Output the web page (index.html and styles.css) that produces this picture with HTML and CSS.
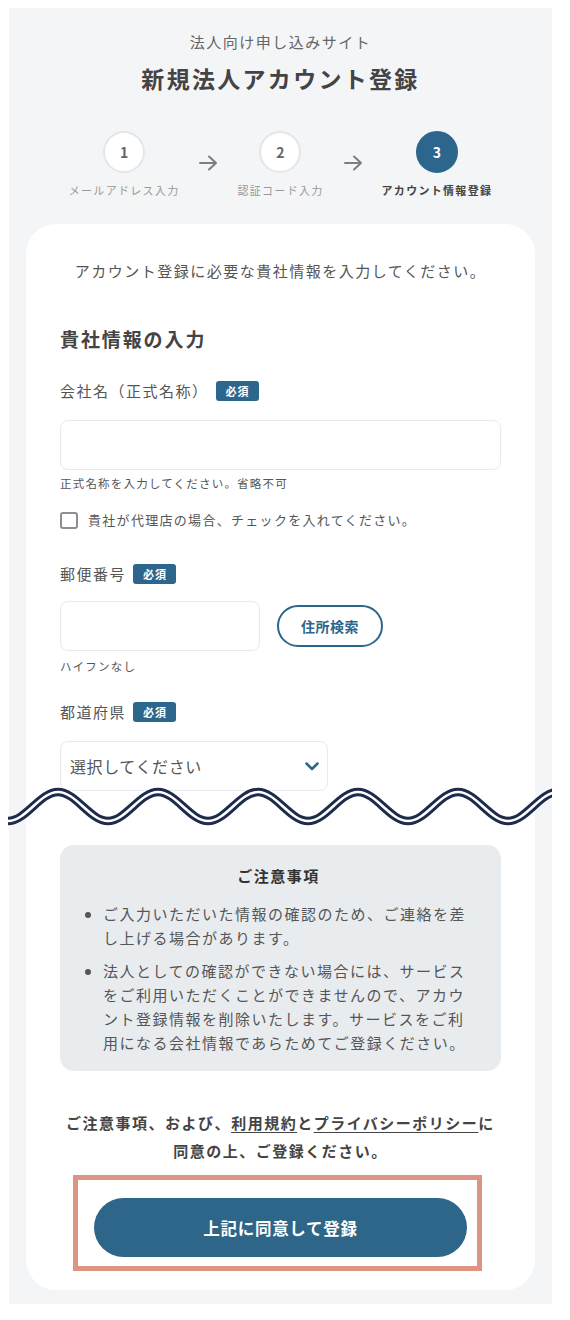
FILE: index.html
```html
<!DOCTYPE html>
<html lang="ja">
<head>
  <meta charset="UTF-8">
  <meta name="viewport" content="width=device-width, initial-scale=1.0">
  <title>新規法人アカウント登録</title>
  <link rel="stylesheet" href="styles.css">
</head>
<body>

<div class="page">
  <p class="site-name">法人向け申し込みサイト</p>
  <h1 class="page-title">新規法人アカウント登録</h1>

  <div class="steps">
    <div class="step">
      <span class="step-num">1</span>
      <span class="step-label">メールアドレス入力</span>
    </div>
    <svg class="step-arrow" width="20" height="16" viewBox="0 0 20 16">
      <path d="M2 8 H18 M11 1.5 L18 8 L11 14.5" fill="none" stroke="#7a7f85" stroke-width="2" stroke-linecap="round" stroke-linejoin="round"/>
    </svg>
    <div class="step">
      <span class="step-num">2</span>
      <span class="step-label">認証コード入力</span>
    </div>
    <svg class="step-arrow" width="20" height="16" viewBox="0 0 20 16">
      <path d="M2 8 H18 M11 1.5 L18 8 L11 14.5" fill="none" stroke="#7a7f85" stroke-width="2" stroke-linecap="round" stroke-linejoin="round"/>
    </svg>
    <div class="step current">
      <span class="step-num">3</span>
      <span class="step-label">アカウント情報登録</span>
    </div>
  </div>

  <div class="card">
    <p class="intro">アカウント登録に必要な貴社情報を入力してください。</p>

    <h2 class="section-title">貴社情報の入力</h2>

    <div class="field-label first">会社名（正式名称）<span class="badge">必須</span></div>
    <input type="text" class="text-input">
    <p class="hint">正式名称を入力してください。省略不可</p>

    <label class="check">
      <input type="checkbox">
      <span>貴社が代理店の場合、チェックを入れてください。</span>
    </label>

    <div class="field-label zip-label">郵便番号<span class="badge">必須</span></div>
    <div class="zip-row">
      <input type="text" class="text-input zip-input">
      <button class="search-btn">住所検索</button>
    </div>
    <p class="hint hint-zip">ハイフンなし</p>

    <div class="field-label pref-label">都道府県<span class="badge">必須</span></div>
    <div class="select-box">
      <span>選択してください</span>
      <svg width="14" height="9" viewBox="0 0 14 9">
        <path d="M1.5 1.5 L7 7 L12.5 1.5" fill="none" stroke="#2d668c" stroke-width="2.5" stroke-linecap="round" stroke-linejoin="round"/>
      </svg>
    </div>

    <div class="cut">
      <svg class="cut-wave" width="544" height="52" viewBox="0 0 544 52">
        <path d="M0 40 C18 40 32 11 50 11 S82 40 100 40 S132 11 150 11 S182 40 200 40 S232 11 250 11 S282 40 300 40 S332 11 350 11 S382 40 400 40 S432 11 450 11 S482 40 500 40 S532 11 550 11" fill="none" stroke="#1e2b4d" stroke-width="8.5"/>
        <path d="M0 40 C18 40 32 11 50 11 S82 40 100 40 S132 11 150 11 S182 40 200 40 S232 11 250 11 S282 40 300 40 S332 11 350 11 S382 40 400 40 S432 11 450 11 S482 40 500 40 S532 11 550 11" fill="none" stroke="#fff" stroke-width="2.6"/>
      </svg>
    </div>

    <div class="notice">
      <p class="notice-title">ご注意事項</p>
      <ul>
        <li>ご入力いただいた情報の確認のため、ご連絡を差し上げる場合があります。</li>
        <li>法人としての確認ができない場合には、サービスをご利用いただくことができませんので、アカウント登録情報を削除いたします。サービスをご利用になる会社情報であらためてご登録ください。</li>
      </ul>
    </div>

    <p class="agree">ご注意事項、および、<a href="#">利用規約</a>と<a href="#">プライバシーポリシー</a>に同意の上、ご登録ください。</p>

    <div class="submit-area">
      <span class="highlight"></span>
      <button class="submit-btn">上記に同意して登録</button>
    </div>
  </div>
</div>

</body>
</html>
```

FILE: styles.css
```css
body {
  margin: 0;
  background-color: #fff;
  font-family: "Noto Sans CJK JP", "Noto Sans", sans-serif;
  color: #555;
}

p {
  margin: 0;
}

.page {
  width: 543px;
  margin: 8px 0 0 9px;
  padding: 23px 0 14px;
  background-color: #f4f5f7;
}

.site-name {
  font-size: 15px;
  line-height: 22px;
  letter-spacing: 1.5px;
  text-align: center;
  color: #666;
}

.page-title {
  margin: 8px 0 0;
  font-size: 23px;
  line-height: 34px;
  letter-spacing: 2.3px;
  text-align: center;
  color: #444;
}

/* steps */
.steps {
  display: flex;
  justify-content: center;
  align-items: flex-start;
  gap: 19px;
  margin-top: 36px;
}

.step {
  display: flex;
  flex-direction: column;
  align-items: center;
}

.step-num {
  width: 42px;
  height: 42px;
  box-sizing: border-box;
  border: 2px solid #e3e6ea;
  border-radius: 50%;
  background-color: #fff;
  display: flex;
  align-items: center;
  justify-content: center;
  font-size: 14px;
  font-weight: bold;
  color: #666;
}

.step-label {
  margin-top: 9px;
  font-size: 11px;
  line-height: 16px;
  letter-spacing: 1.3px;
  color: #999;
}

.step.current .step-num {
  background-color: #2d668c;
  border-color: #2d668c;
  color: #fff;
}

.step.current .step-label {
  font-weight: bold;
  color: #444;
}

.step-arrow {
  margin-top: 24px;
}

/* card */
.card {
  margin: 26px 17px 0;
  padding: 35px 34px 33px;
  background-color: #fff;
  border-radius: 30px;
}

.intro {
  font-size: 15px;
  line-height: 24px;
  letter-spacing: 1.5px;
  text-align: center;
}

.section-title {
  margin: 42px 0 0;
  font-size: 19px;
  line-height: 28px;
  letter-spacing: 1.9px;
  color: #444;
}

.field-label {
  display: flex;
  align-items: center;
  gap: 7px;
  margin-bottom: 17px;
  font-size: 15px;
  line-height: 24px;
  letter-spacing: 1.5px;
}

.field-label.first {
  margin-top: 26px;
}

.field-label.zip-label {
  margin-top: 32px;
  margin-bottom: 15px;
}

.field-label.pref-label {
  margin-top: 25px;
}

.badge {
  height: 20px;
  padding: 0 9px 0 10px;
  border-radius: 3px;
  background-color: #2d668c;
  color: #fff;
  font-size: 11px;
  font-weight: bold;
  line-height: 20px;
  letter-spacing: 1px;
}

.text-input {
  display: block;
  width: 100%;
  height: 50px;
  box-sizing: border-box;
  border: 1px solid #e8eaed;
  border-radius: 8px;
  background-color: #fff;
}

.hint {
  margin-top: 4px;
  font-size: 11.5px;
  line-height: 18px;
  letter-spacing: 1.2px;
}

.hint-zip {
  margin-top: 6px;
}

.check {
  display: flex;
  align-items: center;
  gap: 10px;
  margin-top: 18px;
  font-size: 13px;
  line-height: 20px;
  letter-spacing: 1.3px;
}

.check input {
  appearance: none;
  width: 18px;
  height: 17px;
  margin: 0;
  border: 2px solid #8a8f95;
  border-radius: 3px;
  background-color: #fff;
}

.zip-row {
  display: flex;
  align-items: center;
  gap: 17px;
}

.zip-input {
  width: 200px;
}

.search-btn {
  width: 106px;
  height: 42px;
  border: 2px solid #2d668c;
  border-radius: 21px;
  background-color: #fff;
  color: #2d668c;
  font-family: inherit;
  font-size: 14px;
  font-weight: bold;
  letter-spacing: 0.5px;
  cursor: pointer;
}

.select-box {
  width: 268px;
  height: 50px;
  box-sizing: border-box;
  padding: 0 8px 0 9px;
  border: 1px solid #e8eaed;
  border-radius: 8px;
  display: flex;
  align-items: center;
  justify-content: space-between;
  font-size: 16px;
  letter-spacing: 0.6px;
}

/* cut mark between the two halves of the screenshot */
.cut {
  position: relative;
  height: 54px;
}

.cut-wave {
  position: absolute;
  left: -52px;
  top: -10px;
}

/* notice */
.notice {
  padding: 19px 24px 16px 20px;
  border-radius: 14px;
  background-color: #e9ecef;
}

.notice-title {
  font-size: 15px;
  font-weight: bold;
  line-height: 24px;
  letter-spacing: 1.5px;
  text-align: center;
  color: #333;
}

.notice ul {
  margin: 14px 0 0;
  padding-left: 23px;
}

.notice li {
  font-size: 15px;
  line-height: 24px;
  letter-spacing: 1.5px;
}

.notice li + li {
  margin-top: 9px;
}

.agree {
  margin-top: 38px;
  font-size: 15px;
  font-weight: bold;
  line-height: 28px;
  letter-spacing: 1.5px;
  text-align: center;
  color: #444;
}

.agree a {
  color: #444;
  text-underline-offset: 3px;
}

.submit-area {
  position: relative;
  margin-top: 33px;
}

.submit-btn {
  display: block;
  width: 373px;
  height: 59px;
  margin: 0 auto;
  border: none;
  border-radius: 30px;
  background-color: #2e6689;
  color: #fff;
  font-family: inherit;
  font-size: 16.5px;
  font-weight: bold;
  letter-spacing: 0.7px;
  cursor: pointer;
}

.highlight {
  position: absolute;
  left: 13px;
  top: -23px;
  width: 409px;
  height: 96px;
  box-sizing: border-box;
  border: 5px solid #dd9482;
  pointer-events: none;
}
```
